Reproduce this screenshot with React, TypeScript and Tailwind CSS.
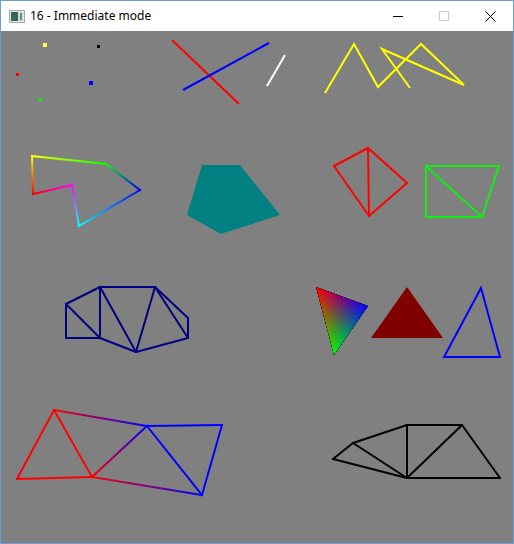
import React from "react";

type P = [number, number];

const pts = (a: P[]) => a.map((p) => p.join(",")).join(" ");

// colour-interpolated segment: each edge gets its own gradient
function GradLine({ id, a, b, ca, cb }: { id: string; a: P; b: P; ca: string; cb: string }) {
    return (
        <>
            <defs>
                <linearGradient id={id} gradientUnits="userSpaceOnUse" x1={a[0]} y1={a[1]} x2={b[0]} y2={b[1]}>
                    <stop offset="0" stopColor={ca} />
                    <stop offset="1" stopColor={cb} />
                </linearGradient>
            </defs>
            <line x1={a[0]} y1={a[1]} x2={b[0]} y2={b[1]} stroke={`url(#${id})`} strokeWidth={2} strokeLinecap="square" />
        </>
    );
}

function Edges({ p, e, color }: { p: P[]; e: [number, number][]; color: string }) {
    return (
        <g stroke={color} strokeWidth={2} strokeLinecap="round" strokeLinejoin="round">
            {e.map(([i, j], k) => (
                <line key={k} x1={p[i][0]} y1={p[i][1]} x2={p[j][0]} y2={p[j][1]} />
            ))}
        </g>
    );
}

// polyline with colours at the corners
const loop: { p: P; c: string }[] = [
    { p: [32, 156], c: "#ffff00" },
    { p: [106, 164], c: "#00ff00" },
    { p: [140, 190], c: "#0000ff" },
    { p: [79, 226], c: "#00ffff" },
    { p: [72, 185], c: "#ff00ff" },
    { p: [33, 194], c: "#ff0000" },
];

const navy: P[] = [
    [66, 304], [100, 287], [155, 287], [188, 318], [188, 338], [136, 352], [100, 338], [66, 338],
];

const strip: P[] = [
    [17, 479], [54, 410], [92, 477], [147, 426], [202, 495], [222, 425],
];
const stripCol = ["#ff0000", "#ff0000", "#ff0000", "#0000ff", "#0000ff", "#0000ff"];
const stripEdges: [number, number][] = [[0, 1], [1, 2], [0, 2], [1, 3], [2, 3], [2, 4], [3, 4], [3, 5], [4, 5]];

const fan: P[] = [
    [333, 459], [353, 443], [407, 425], [462, 425], [500, 478], [407, 478],
];

function Scene() {
    const R: P = [316, 287];
    const B: P = [368, 306];
    const G: P = [334, 355];
    return (
        <svg width={512} height={512} viewBox="1 31 512 512" className="block">
            {/* points */}
            <rect x={43} y={43} width={4} height={4} fill="#ffff40" />
            <rect x={97} y={45} width={3} height={3} fill="#000000" />
            <rect x={16} y={73} width={3} height={3} fill="#ff0000" />
            <rect x={89} y={81} width={4} height={4} fill="#0000ff" />
            <rect x={39} y={98} width={3} height={3} fill="#00ff00" />

            {/* lines */}
            <g strokeWidth={2}>
                <line x1={172} y1={40} x2={239} y2={104} stroke="#ff0000" />
                <line x1={183} y1={90} x2={269} y2={43} stroke="#0000ff" />
                <line x1={267} y1={86} x2={285} y2={55} stroke="#ffffff" />
            </g>

            {/* line strip */}
            <polyline
                points={pts([[325, 93], [354, 44], [378, 87], [421, 44], [464, 85], [382, 49], [410, 88]])}
                fill="none"
                stroke="#ffff00"
                strokeWidth={2}
                strokeLinejoin="miter"
            />

            {/* line loop with colours */}
            {loop.map((v, i) => {
                const n = loop[(i + 1) % loop.length];
                return <GradLine key={i} id={`lp${i}`} a={v.p} b={n.p} ca={v.c} cb={n.c} />;
            })}

            {/* polygon */}
            <polygon points={pts([[202, 165], [240, 165], [280, 215], [221, 234], [187, 215]])} fill="#008080" />

            {/* triangles outline */}
            <Edges
                p={[[334, 166], [368, 148], [407, 183], [369, 216]]}
                e={[[0, 1], [1, 3], [3, 0], [1, 2], [2, 3]]}
                color="#ff0000"
            />
            <Edges
                p={[[426, 166], [499, 166], [482, 217], [426, 217]]}
                e={[[0, 1], [1, 2], [2, 3], [3, 0], [0, 2]]}
                color="#10f010"
            />

            {/* quad strip */}
            <Edges
                p={navy}
                e={[[0, 1], [1, 2], [2, 3], [3, 4], [4, 5], [5, 6], [6, 7], [7, 0], [0, 6], [1, 6], [1, 5], [2, 5], [2, 4]]}
                color="#000080"
            />

            {/* smooth shaded triangle */}
            <defs>
                <linearGradient id="tr" gradientUnits="userSpaceOnUse" x1={R[0]} y1={R[1]} x2={360} y2={318}>
                    <stop offset="0" stopColor="#ff0000" />
                    <stop offset="1" stopColor="#000000" />
                </linearGradient>
                <linearGradient id="tb" gradientUnits="userSpaceOnUse" x1={B[0]} y1={B[1]} x2={324} y2={318}>
                    <stop offset="0" stopColor="#0000ff" />
                    <stop offset="1" stopColor="#000000" />
                </linearGradient>
                <linearGradient id="tg" gradientUnits="userSpaceOnUse" x1={G[0]} y1={G[1]} x2={353.4} y2={300.5}>
                    <stop offset="0" stopColor="#00ff00" />
                    <stop offset="1" stopColor="#000000" />
                </linearGradient>
            </defs>
            <g style={{ isolation: "isolate" }}>
                <polygon points={pts([R, B, G])} fill="url(#tr)" />
                <polygon points={pts([R, B, G])} fill="url(#tb)" style={{ mixBlendMode: "plus-lighter" }} />
                <polygon points={pts([R, B, G])} fill="url(#tg)" style={{ mixBlendMode: "plus-lighter" }} />
            </g>

            <polygon points={pts([[407, 287], [443, 338], [371, 338]])} fill="#800000" />
            <polygon
                points={pts([[481, 288], [500, 357], [444, 357]])}
                fill="none"
                stroke="#0000ff"
                strokeWidth={2}
                strokeLinejoin="miter"
            />

            {/* triangle strip, red to blue */}
            {stripEdges.map(([i, j], k) => (
                <GradLine key={k} id={`st${k}`} a={strip[i]} b={strip[j]} ca={stripCol[i]} cb={stripCol[j]} />
            ))}

            {/* triangle fan */}
            <Edges
                p={fan}
                e={[[0, 1], [1, 2], [2, 3], [3, 4], [4, 5], [5, 0], [1, 5], [2, 5], [3, 5]]}
                color="#000000"
            />
        </svg>
    );
}

export default function App() {
    return (
        <div className="w-[514px] h-[544px] border border-[#6a9fd4] bg-white flex flex-col overflow-hidden font-['Noto_Sans',sans-serif]">
            {/* Title bar */}
            <div className="h-[30px] shrink-0 flex items-center bg-white">
                <svg width={16} height={13} viewBox="0 0 16 13" className="ml-[8px] mt-[1px]">
                    <rect x={0.5} y={0.5} width={15} height={12} fill="#e8e8e8" stroke="#a8a8a8" />
                    <rect x={2} y={2} width={7} height={9} fill="#2f6a5a" />
                    <rect x={9} y={2} width={5} height={9} fill="#cfd8d8" />
                    <rect x={11} y={3} width={2} height={7} fill="#6f8f8f" />
                </svg>
                <span className="ml-[5px] text-[12px] text-black leading-none">16 - Immediate mode</span>
                <div className="ml-auto flex items-center h-full">
                    <div className="w-[46px] h-full flex items-center justify-center">
                        <div className="w-[10px] h-[1px] bg-black" />
                    </div>
                    <div className="w-[46px] h-full flex items-center justify-center">
                        <div className="w-[10px] h-[10px] border border-[#c8c8c8]" />
                    </div>
                    <div className="w-[46px] h-full flex items-center justify-center">
                        <svg width={11} height={11} viewBox="0 0 11 11">
                            <path d="M0.5 0.5L10.5 10.5M10.5 0.5L0.5 10.5" stroke="#000" strokeWidth={1} />
                        </svg>
                    </div>
                </div>
            </div>
            {/* GL canvas */}
            <div className="w-[512px] h-[512px] bg-[#808080]">
                <Scene />
            </div>
        </div>
    );
}
